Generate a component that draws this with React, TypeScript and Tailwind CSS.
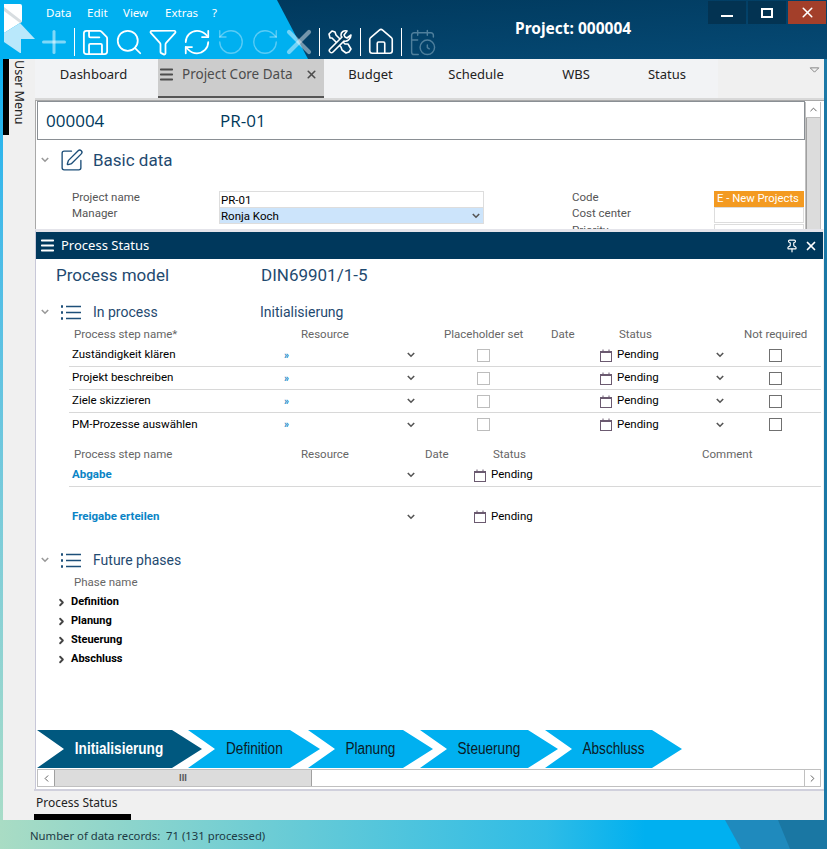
import { CalendarClock, ChevronLeft, ChevronRight, ChevronUp, Funnel, House, Menu, Pin, Plus, RefreshCw, RotateCcw, RotateCw, Save, Search, SquarePen, X } from "lucide-react";

const steps = ["Zuständigkeit klären", "Projekt beschreiben", "Ziele skizzieren", "PM-Prozesse auswählen"];
const phases = ["Definition", "Planung", "Steuerung", "Abschluss"];
const arrows = [
  { label: "Initialisierung", width: "w-[165px]", color: "bg-[#00587f] text-white font-bold" },
  { label: "Definition", width: "w-[132px] -ml-[14px]", color: "bg-[#00b0f0] text-[#0b1b26]" },
  { label: "Planung", width: "w-[125px] -ml-[12px]", color: "bg-[#00b0f0] text-[#0b1b26]" },
  { label: "Steuerung", width: "w-[138px] -ml-[13px]", color: "bg-[#00b0f0] text-[#0b1b26]" },
  { label: "Abschluss", width: "w-[137px] -ml-[13px]", color: "bg-[#00b0f0] text-[#0b1b26]" },
];

function Chevron({ className = "" }: { className?: string }) {
  return (
    <svg viewBox="0 0 10 7" className={`block w-[8px] h-[6px] text-[#555] ${className}`} fill="none" stroke="currentColor" strokeWidth="2">
      <path d="M1 1l4 4 4-4" />
    </svg>
  );
}

function Cal() {
  return (
    <svg viewBox="0 0 12 13" className="block w-[12px] h-[13px] shrink-0" fill="none">
      <rect x="0.5" y="2.5" width="11" height="10" stroke="#6b5a70" />
      <rect x="0.5" y="2" width="11" height="2" fill="#6b5a70" />
      <path d="M3 0.5v2M9 0.5v2" stroke="#6b5a70" />
    </svg>
  );
}

function Box({ dim }: { dim?: boolean }) {
  return <span className={`block w-[13px] h-[13px] border ${dim ? "border-[#bdbdbd]" : "border-[#707070]"}`} />;
}

function Logo() {
  return (
    <svg viewBox="0 0 36 56" className="w-[36px] h-[56px] shrink-0">
      <path d="M4 4h16a2 2 0 0 1 2 2v15l-2 2L4 33z" fill="#fff" />
      <path d="M4 7l18 14v1l-2 1L4 11z" fill="#d8dde0" />
      <path d="M20 23l15 16H21v14h-1L4 42V33z" fill="#b9e8fb" />
    </svg>
  );
}

function ToolsIcon() {
  return (
    <svg viewBox="0 0 26 26" className="w-[26px] h-[26px]" fill="none" stroke="#fff" strokeWidth="1.6" strokeLinejoin="round">
      <path d="M2 5l3-3 3 1 1 3 9 9 3 0 3 5-2 3-3 1-4-3-1-3-9-9-2 0z" />
      <path d="M24 6l-4 3-2-1-1-2 3-4c-3-1-6 1-6 4 0 1 0 2 1 2L3 20c-1 1-1 2 0 3s2 1 3 0l11-11c3 1 7-2 7-6z" fill="#01395c" />
    </svg>
  );
}

function Divider() {
  return <span className="block w-px h-[28px] bg-white mx-[3px] shrink-0" />;
}

function Tool({ children }: { children: React.ReactNode }) {
  return <span className="w-[34px] h-[28px] shrink-0 flex items-center justify-center">{children}</span>;
}

function ListIcon() {
  return (
    <svg viewBox="0 0 20 15" className="w-[20px] h-[15px] ml-[12px]" fill="none" stroke="#1d4f79" strokeWidth="1.6">
      <path d="M5 1.5h15M5 7.5h15M5 13.5h15" />
      <path d="M0 1.5h2M0 7.5h2M0 13.5h2" strokeWidth="2.4" />
    </svg>
  );
}

function Row({ name, last }: { name: string; last?: boolean }) {
  return (
    <div className={`flex items-center h-[23px] text-[11.5px] text-black ${last ? "" : "border-b border-[#d8d8d8]"}`}>
      <span className="w-[215px] pl-[3px]">{name}</span>
      <span className="w-[123px] text-[#0a84c6] font-bold text-[10px]">»</span>
      <span className="w-[70px]"><Chevron /></span>
      <span className="w-[123px]"><Box dim /></span>
      <span className="w-[116px] flex items-center gap-[5px]"><Cal />Pending</span>
      <span className="w-[53px]"><Chevron /></span>
      <Box />
    </div>
  );
}

function SubmitRow({ name, border, className = "" }: { name: string; border?: boolean; className?: string }) {
  return (
    <div className={`flex items-center h-[23px] text-[11.5px] ${border ? "border-b border-[#d8d8d8]" : ""} ${className}`}>
      <span className="w-[338px] pl-[3px] font-bold text-[#0a84c6]">{name}</span>
      <span className="w-[67px]"><Chevron /></span>
      <span className="flex items-center gap-[5px] text-black"><Cal />Pending</span>
    </div>
  );
}

export default function App() {
  return (
    <div className="w-[827px] h-[849px] flex flex-col overflow-hidden relative font-['Roboto',sans-serif] text-[#00395c] bg-[#00b0f0]">
      {/* title bar */}
      <header className="relative h-[59px] shrink-0 bg-gradient-to-br from-[#003659] to-[#064a75] overflow-hidden">
        <div className="absolute inset-0 bg-[#00b0f0] [clip-path:polygon(0_0,277px_0,308px_100%,0_100%)]" />
        <div className="relative flex h-full">
          <Logo />
          <div className="flex flex-col ml-[1px]">
            <nav className="flex h-[26px] items-center pl-[9px] text-[11.5px] text-white font-['Noto_Sans',sans-serif]">
              <span className="w-[41px]">Data</span>
              <span className="w-[36px]">Edit</span>
              <span className="w-[42px]">View</span>
              <span className="w-[47px]">Extras</span>
              <span>?</span>
            </nav>
            <div className="flex items-center h-[28px] mt-[2px] text-white">
              <Tool><Plus size={36} strokeWidth={2} className="shrink-0 text-white/50" /></Tool>
              <Divider />
              <Tool><Save size={31} strokeWidth={1.4} className="shrink-0" /></Tool>
              <Tool><Search size={30} strokeWidth={1.4} className="shrink-0" /></Tool>
              <Tool><Funnel size={30} strokeWidth={1.4} className="shrink-0" /></Tool>
              <Tool><RefreshCw size={30} strokeWidth={1.4} className="shrink-0" /></Tool>
              <Tool><RotateCcw size={30} strokeWidth={1.1} className="shrink-0 text-white/35" /></Tool>
              <Tool><RotateCw size={30} strokeWidth={1.1} className="shrink-0 text-white/35" /></Tool>
              <Tool><X size={40} strokeWidth={2.5} className="shrink-0 text-white/45" /></Tool>
              <Divider />
              <Tool><ToolsIcon /></Tool>
              <Divider />
              <Tool><House size={30} strokeWidth={1.3} className="shrink-0" /></Tool>
              <Divider />
              <Tool><CalendarClock size={29} strokeWidth={1.2} className="shrink-0 text-[#4f7f9c]" /></Tool>
            </div>
          </div>
        </div>
        <h1 className="absolute left-[515px] top-[17px] text-[15.5px] font-bold text-white font-['Noto_Sans',sans-serif]">Project: 000004</h1>
        <div className="absolute right-[1px] top-[1px] flex gap-[2px] h-[23px]">
          <span className="w-[38px] bg-[#033352] flex items-center justify-center"><span className="block w-[12px] h-[2px] bg-white mt-[6px]" /></span>
          <span className="w-[38px] bg-[#033352] flex items-center justify-center"><span className="block w-[12px] h-[10px] border-2 border-white" /></span>
          <span className="w-[38px] bg-[#a33f2a] flex items-center justify-center"><X size={17} strokeWidth={2.2} className="text-white" /></span>
        </div>
      </header>

      <div className="flex flex-1 min-h-0">
        <div className="w-[3px] bg-gradient-to-b from-[#00b0f0] to-[#a8dcc8]" />
        <div className="flex-1 min-w-0 bg-[#f0f0f0] flex">
          {/* user menu */}
          <aside className="w-[32px] shrink-0 flex">
            <span className="block w-[6px] h-[76px] bg-black" />
            <span className="[writing-mode:vertical-rl] pl-[1px] pt-[1px] text-[12.5px] text-[#222] font-['Noto_Sans',sans-serif] leading-[18px]">User Menu</span>
          </aside>

          <main className="flex-1 min-w-0 flex flex-col">
            {/* tabs */}
            <div className="flex h-[41px] shrink-0 text-[13px] text-[#222] font-['Noto_Sans',sans-serif] border-b-2 border-[#d8d8d8]">
              <div className="w-[683px] bg-[#f2f3f5] flex">
                <span className="w-[123px] flex items-center justify-center pr-[6px] pb-[8px]">Dashboard</span>
                <span className="w-[166px] flex items-center bg-[#cccccc] border-b-2 border-[#555] text-[#4d4d4d] text-[13.5px] pl-[1px] pb-[6px]">
                  <Menu size={17} strokeWidth={2.6} className="mr-[7px] shrink-0 -ml-[1px]" />
                  Project Core Data
                  <X size={13} strokeWidth={3} className="ml-[12px] shrink-0" />
                </span>
                <span className="w-[93px] flex items-center justify-center pb-[8px]">Budget</span>
                <span className="w-[118px] flex items-center justify-center pb-[8px]">Schedule</span>
                <span className="w-[82px] flex items-center justify-center pb-[8px]">WBS</span>
                <span className="w-[100px] flex items-center justify-center pb-[8px]">Status</span>
              </div>
              <div className="flex-1 flex justify-end pr-[4px] pt-[8px]">
                <svg viewBox="0 0 12 7" className="w-[11px] h-[6px]" fill="#f0f0f0" stroke="#777" strokeWidth="1"><path d="M1 1h10L6 6z" /></svg>
              </div>
            </div>

            {/* project core data, cut off by the docked panel */}
            <section className="h-[129px] shrink-0 bg-white border-l border-t border-[#a8a8a8] flex overflow-hidden">
              <div className="flex-1 min-w-0">
                <div className="ml-[1px] h-[39px] border border-[#8a8f94] flex items-center text-[17px] font-['Open_Sans',sans-serif] text-[#00395c]">
                  <span className="w-[182px] pl-[8px]">000004</span>
                  <span>PR-01</span>
                </div>
                <div className="flex items-center h-[40px] pl-[5px]">
                  <Chevron className="text-[#999]" />
                  <SquarePen size={25} strokeWidth={1.3} className="ml-[10px] shrink-0 text-[#1d4f79]" />
                  <span className="ml-[9px] pt-[1px] text-[17px] text-[#1f4a70]">Basic data</span>
                </div>
                <div className="grid grid-cols-[147px_265px_88px_142px_90px] pl-[36px] mt-[11px] text-[11.5px] text-[#555] leading-[16px]">
                  <span className="h-[16px] leading-[12px]">Project name</span>
                  <span className="border border-b-0 border-[#ddd] pl-[1px] text-black h-[16px]">PR-01</span>
                  <span />
                  <span className="h-[16px] leading-[12px]">Code</span>
                  <span className="bg-[#f39a21] text-white text-[11.3px] pl-[3px] h-[16px] whitespace-nowrap overflow-hidden">E - New Projects</span>
                  <span className="h-[16px] leading-[12px]">Manager</span>
                  <span className="bg-[#cce4fb] border border-[#ddd] text-black pl-[1px] h-[17px] flex items-center justify-between pr-[3px]">Ronja Koch<Chevron /></span>
                  <span />
                  <span className="h-[16px] leading-[12px]">Cost center</span>
                  <span className="border border-[#ddd] h-[16px]" />
                  <span />
                  <span />
                  <span />
                  <span className="h-[16px] leading-[12px]">Priority</span>
                  <span className="border border-[#ddd] h-[16px]" />
                </div>
              </div>
              <div className="w-[16px] shrink-0 bg-white border-l border-r border-[#c0c0c0] mr-[3px] mt-[1px] flex flex-col">
                <span className="h-[16px] shrink-0 flex items-center justify-center border-b border-[#c0c0c0]"><ChevronUp size={11} className="text-[#555]" /></span>
                <span className="flex-1 bg-[#dcdcdc] border-l border-[#a0a0a0]" />
              </div>
            </section>

            {/* process status panel */}
            <section className="h-[560px] shrink-0 bg-white border-l border-t-[3px] border-l-[#c8c8d8] border-t-[#e4e4ea] flex flex-col mr-[1px]">
              <div className="h-[27px] shrink-0 bg-[#00385c] flex items-center text-white text-[13px] font-['Noto_Sans',sans-serif] pl-[3px]">
                <Menu size={17} strokeWidth={2.6} className="shrink-0" />
                <span className="ml-[5px] flex-1">Process Status</span>
                <Pin size={14} strokeWidth={2} className="mr-[5px]" />
                <X size={14} strokeWidth={3} className="mr-[5px]" />
              </div>

              <div className="flex items-center h-[34px] shrink-0 pl-[20px] text-[17px] text-[#1f4a70]">
                <span className="w-[205px]">Process model</span>
                <span>DIN69901/1-5</span>
              </div>

              <div className="flex items-center h-[36px] shrink-0 mt-[1px] pl-[5px] text-[14px] text-[#1f4a70]">
                <Chevron className="text-[#999]" />
                <ListIcon />
                <span className="ml-[12px] w-[167px]">In process</span>
                <span>Initialisierung</span>
              </div>

              <div className="pl-[33px] mr-[2px] -mt-[4px]">
                <div className="h-[18px] text-[11.5px] text-[#666] flex items-center">
                  <span className="w-[232px] pl-[5px]">Process step name*</span>
                  <span className="w-[143px]">Resource</span>
                  <span className="w-[107px]">Placeholder set</span>
                  <span className="w-[68px]">Date</span>
                  <span className="w-[125px]">Status</span>
                  <span>Not required</span>
                </div>
                {steps.map((s, i) => <Row key={s} name={s} last={i === steps.length - 1} />)}

                <div className="h-[18px] mt-[10px] text-[11.5px] text-[#666] flex items-center">
                  <span className="w-[232px] pl-[5px]">Process step name</span>
                  <span className="w-[124px]">Resource</span>
                  <span className="w-[68px]">Date</span>
                  <span className="w-[209px]">Status</span>
                  <span>Comment</span>
                </div>
                <SubmitRow name="Abgabe" border />
                <SubmitRow name="Freigabe erteilen" className="mt-[18px]" />
              </div>

              <div className="flex items-center h-[32px] shrink-0 mt-[16px] pl-[5px] text-[14px] text-[#1f4a70]">
                <Chevron className="text-[#999]" />
                <ListIcon />
                <span className="ml-[12px]">Future phases</span>
              </div>
              <div className="pl-[38px] text-[11.5px] text-[#666] leading-[14px] -mt-[1px]">Phase name</div>
              <ul className="pl-[20px] mt-[4px]">
                {phases.map((p) => (
                  <li key={p} className="flex items-center h-[19px] text-[11px] font-bold text-black">
                    <ChevronRight size={11} strokeWidth={4} className="text-[#444] mr-[4px] shrink-0" />
                    {p}
                  </li>
                ))}
              </ul>

              <div className="flex-1" />

              {/* phase arrows */}
              <div className="flex h-[38px] shrink-0 pl-[1px] font-['Liberation_Sans',sans-serif] text-[16px]">
                {arrows.map((a) => (
                  <div key={a.label} className={`${a.width} ${a.color} flex items-center justify-center [clip-path:polygon(0_0,calc(100%-30px)_0,100%_50%,calc(100%-30px)_100%,0_100%,27px_50%)]`}>
                    <span className="scale-x-[.85] whitespace-nowrap">{a.label}</span>
                  </div>
                ))}
              </div>

              {/* horizontal scrollbar */}
              <div className="h-[18px] shrink-0 mt-px ml-[1px] mr-[2px] border border-[#c0c0c0] flex items-stretch">
                <span className="w-[16px] flex items-center justify-center"><ChevronLeft size={11} className="text-[#555]" /></span>
                <span className="w-[258px] bg-[#dcdcdc] border-r border-l border-[#a0a0a0] flex items-center justify-center text-[9px] text-[#555] font-bold leading-none">III</span>
                <span className="flex-1" />
                <span className="w-[16px] flex items-center justify-center border-l border-[#c0c0c0]"><ChevronRight size={11} className="text-[#555]" /></span>
              </div>
              <div className="h-[2px] shrink-0" />
            </section>

            {/* docked tab */}
            <div className="flex-1 border-t-2 border-[#d0d0dc] flex flex-col justify-between -ml-px">
              <span className="pl-[2px] pt-[3px] text-[12px] text-[#222] font-['Noto_Sans',sans-serif]">Process Status</span>
              <span className="block w-[97px] h-[6px] bg-black" />
            </div>
          </main>
        </div>
        <div className="w-[3px] bg-[#1b78a6]" />
      </div>

      {/* status bar */}
      <footer className="relative h-[29px] shrink-0 flex items-center pl-[30px] pt-[3px] text-[11.3px] text-[#1c3a44] font-['Noto_Sans',sans-serif] bg-[linear-gradient(90deg,#a9dcc4_0%,#2fbce6_66%,#00b0f0_78%)] overflow-hidden">
        Number of data records:&nbsp; 71 (131 processed)
        <div className="absolute inset-0 bg-[#1f8abd] [clip-path:polygon(725px_0,827px_0,827px_100%,741px_100%)]" />
        <div className="absolute inset-0 bg-[#1a77a3] [clip-path:polygon(778px_0,827px_0,827px_100%,790px_100%)]" />
      </footer>
    </div>
  );
}
